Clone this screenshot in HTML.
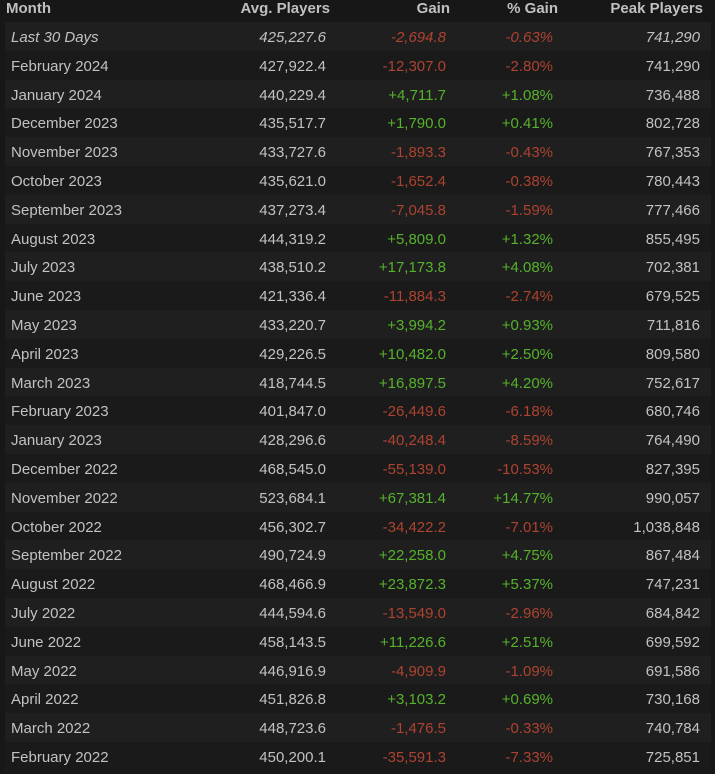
<!DOCTYPE html>
<html><head><meta charset="utf-8"><style>
html,body{margin:0;padding:0;background:#171717;width:715px;height:773px;overflow:hidden}
body{font-family:"Liberation Sans",Arial,sans-serif;font-size:15px;color:#c2c2c2}
.h{position:absolute;top:0;left:0;width:715px;height:22px;font-weight:bold;color:#c0c0c0}
.r{position:absolute;left:5px;width:706px;height:28.8px;line-height:32px}
.r.o{background:#1f1f1f}.r.e{background:#1a1a1a}
.c{position:absolute;white-space:nowrap}
.m{left:6px}
.a{right:385px}.g{right:265px}.p{right:158px}.k{right:11px}
.h .c{top:0;line-height:18px}
.h .m{left:6px}.h .a{right:385px}.h .g{right:265px}.h .p{right:157px}.h .k{right:12px}
.n{color:#ad4331}.pos{color:#56b22c}
.it{font-style:italic}
</style></head><body>
<div class="h"><span class="c m">Month</span><span class="c a">Avg. Players</span><span class="c g">Gain</span><span class="c p">% Gain</span><span class="c k">Peak Players</span></div>
<div id="t"></div>
<script>
var d=[["Last 30 Days","425,227.6","-2,694.8","-0.63%","741,290"],
["February 2024","427,922.4","-12,307.0","-2.80%","741,290"],
["January 2024","440,229.4","+4,711.7","+1.08%","736,488"],
["December 2023","435,517.7","+1,790.0","+0.41%","802,728"],
["November 2023","433,727.6","-1,893.3","-0.43%","767,353"],
["October 2023","435,621.0","-1,652.4","-0.38%","780,443"],
["September 2023","437,273.4","-7,045.8","-1.59%","777,466"],
["August 2023","444,319.2","+5,809.0","+1.32%","855,495"],
["July 2023","438,510.2","+17,173.8","+4.08%","702,381"],
["June 2023","421,336.4","-11,884.3","-2.74%","679,525"],
["May 2023","433,220.7","+3,994.2","+0.93%","711,816"],
["April 2023","429,226.5","+10,482.0","+2.50%","809,580"],
["March 2023","418,744.5","+16,897.5","+4.20%","752,617"],
["February 2023","401,847.0","-26,449.6","-6.18%","680,746"],
["January 2023","428,296.6","-40,248.4","-8.59%","764,490"],
["December 2022","468,545.0","-55,139.0","-10.53%","827,395"],
["November 2022","523,684.1","+67,381.4","+14.77%","990,057"],
["October 2022","456,302.7","-34,422.2","-7.01%","1,038,848"],
["September 2022","490,724.9","+22,258.0","+4.75%","867,484"],
["August 2022","468,466.9","+23,872.3","+5.37%","747,231"],
["July 2022","444,594.6","-13,549.0","-2.96%","684,842"],
["June 2022","458,143.5","+11,226.6","+2.51%","699,592"],
["May 2022","446,916.9","-4,909.9","-1.09%","691,586"],
["April 2022","451,826.8","+3,103.2","+0.69%","730,168"],
["March 2022","448,723.6","-1,476.5","-0.33%","740,784"],
["February 2022","450,200.1","-35,591.3","-7.33%","725,851"]];
var h="";d.forEach(function(r,i){var cl=r[2][0]=="-"?"n":"pos";
h+='<div class="r '+(i%2?'e':'o')+(i==0?' it':'')+'" style="top:'+(22+i*28.8)+'px"><span class="c m">'+r[0]+'</span><span class="c a">'+r[1]+'</span><span class="c g '+cl+'">'+r[2]+'</span><span class="c p '+cl+'">'+r[3]+'</span><span class="c k">'+r[4]+'</span></div>';});
document.getElementById("t").innerHTML=h;
</script>
</body></html>
